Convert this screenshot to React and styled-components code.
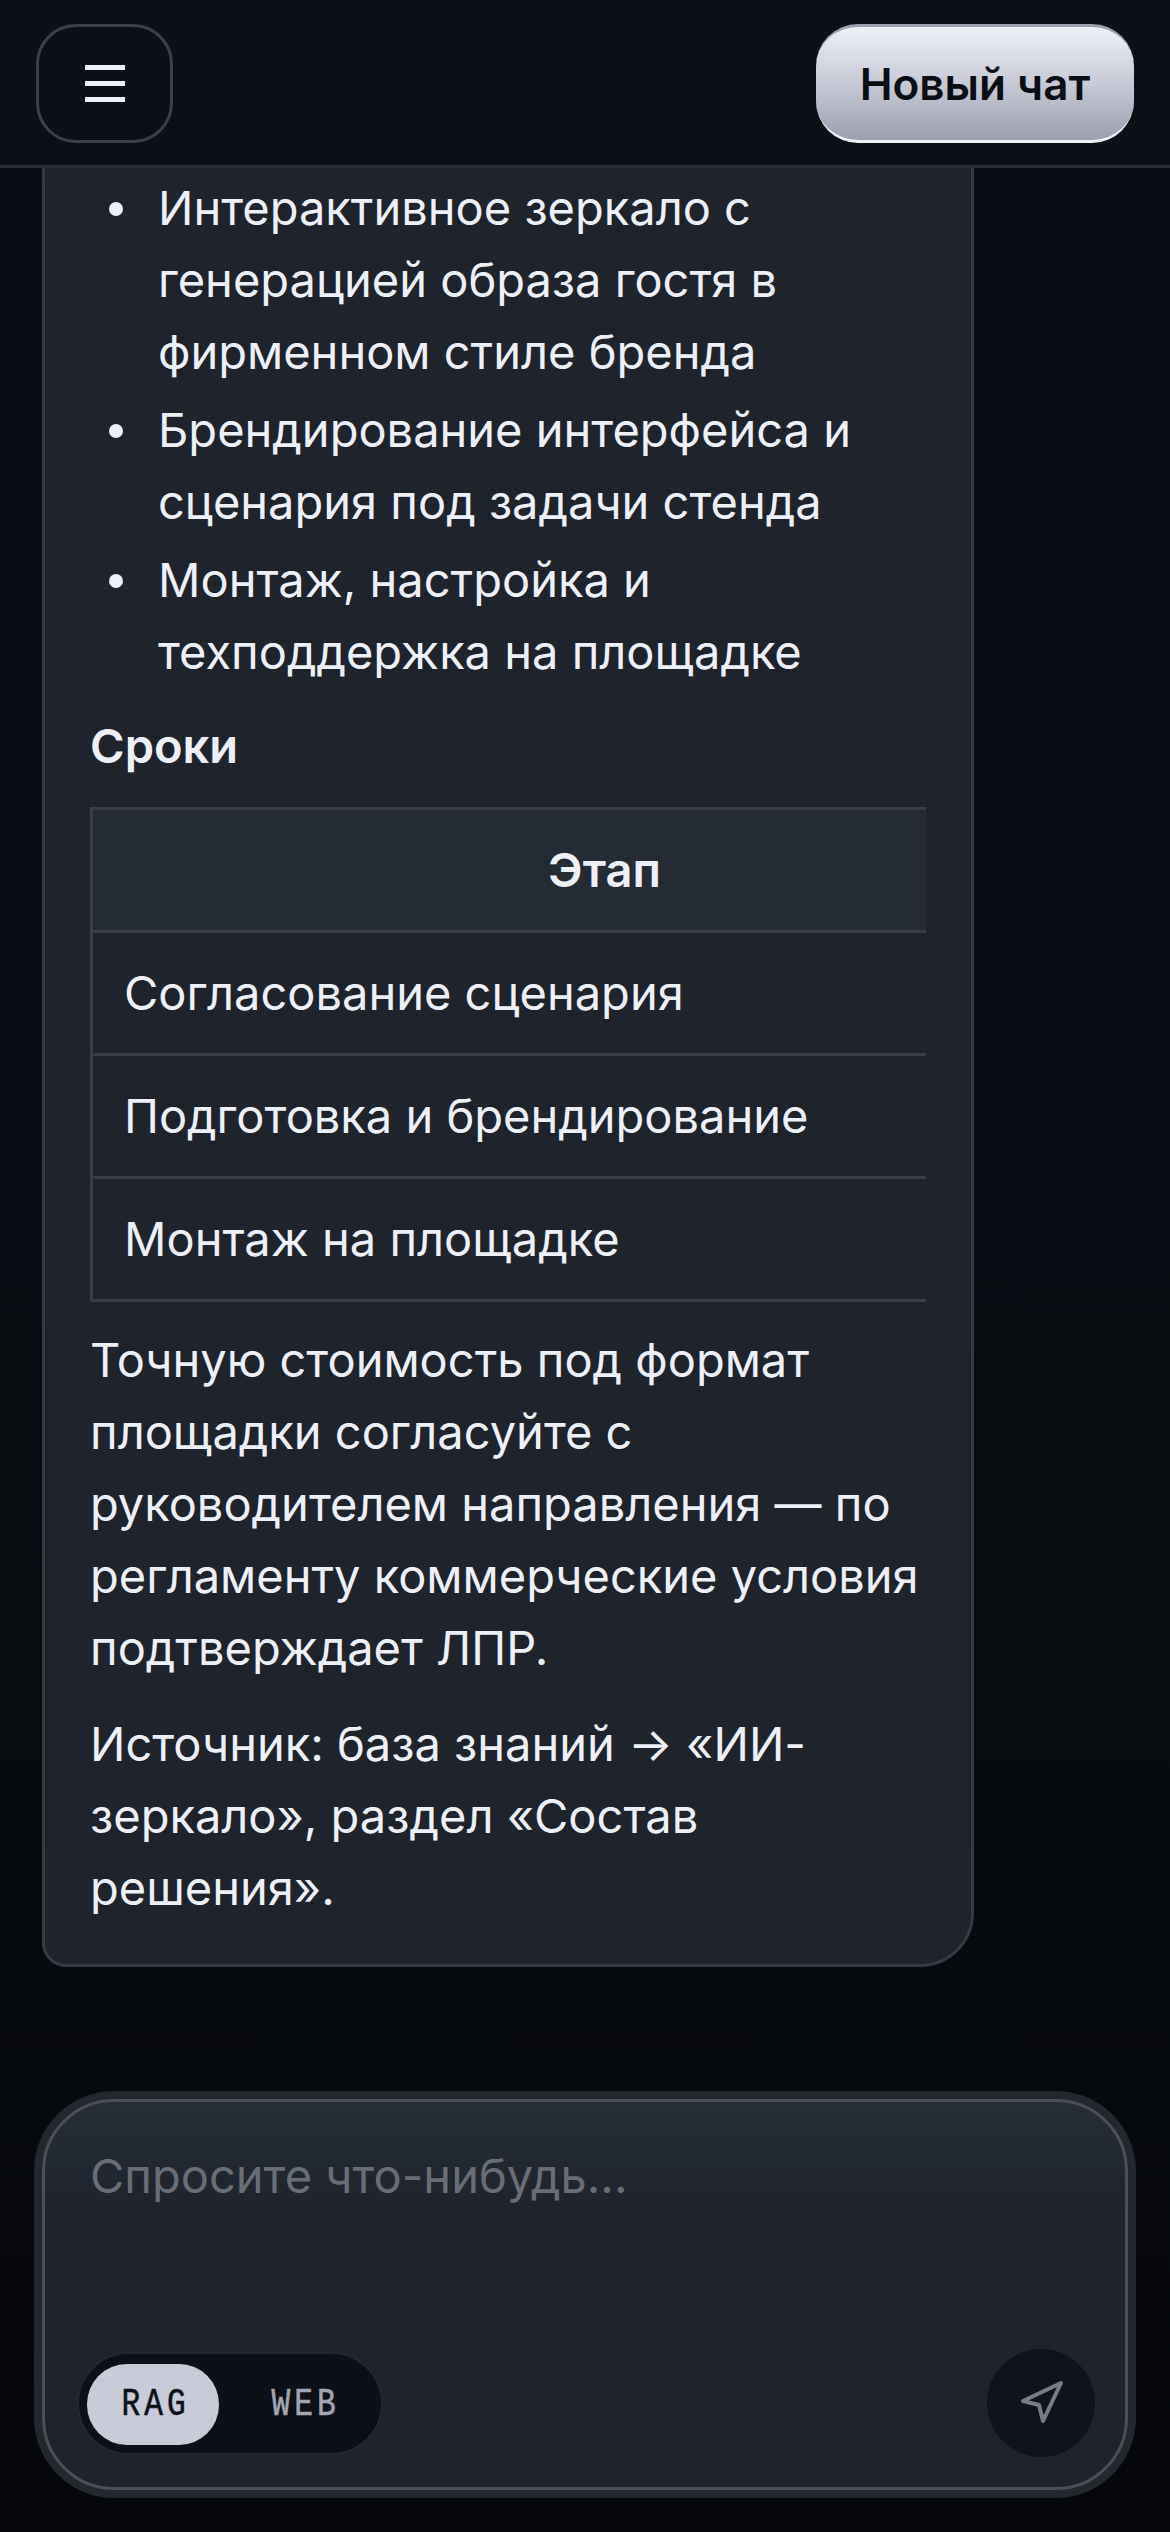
import React from "react";
import styled, { createGlobalStyle } from "styled-components";
import { Navigation } from "lucide-react";

const Global = createGlobalStyle`
  html, body {
    margin: 0;
    padding: 0;
    background: #07090e;
  }
  * {
    box-sizing: border-box;
  }
`;

const Page = styled.div`
  width: 1170px;
  height: 2532px;
  display: flex;
  flex-direction: column;
  overflow: hidden;
  font-family: Inter, "Noto Sans", sans-serif;
  color: #eef0f8;
  background: linear-gradient(180deg, #0c1016 0%, #0a0d13 50%, #05070b 100%);
`;

const Header = styled.header`
  flex: none;
  height: 168px;
  padding: 24px 36px 0;
  display: flex;
  justify-content: space-between;
  align-items: flex-start;
  background: #0d1117;
  border-bottom: 3px solid #2a2e35;
`;

const MenuButton = styled.button`
  width: 137px;
  height: 119px;
  padding: 0;
  display: flex;
  flex-direction: column;
  align-items: center;
  justify-content: center;
  gap: 11px;
  background: transparent;
  border: 3px solid #3c4047;
  border-radius: 40px;
`;

const MenuBar = styled.span`
  width: 40px;
  height: 5px;
  background: #eef0f8;
`;

const NewChat = styled.button`
  width: 318px;
  height: 119px;
  padding: 0;
  font-family: inherit;
  font-size: 44px;
  font-weight: 600;
  color: #0a0d13;
  background: linear-gradient(180deg, #eef0f8 0%, #c7cad6 50%, #9b9fae 100%);
  border: none;
  border-top: 3px solid #9b9fae;
  border-bottom: 3px solid #eef0f8;
  border-radius: 42px;
`;

const Feed = styled.main`
  flex: 1;
  min-height: 0;
  overflow: hidden;
  padding: 0 196px 132px 42px;
  display: flex;
  flex-direction: column;
  justify-content: flex-end;
`;

const Card = styled.article`
  flex: none;
  padding: 24px 45px 40px;
  font-size: 47px;
  line-height: 72px;
  background: #1e232c;
  border: 3px solid #353a43;
  border-radius: 24px 24px 54px 24px;
`;

const List = styled.ul`
  margin: 0;
  padding: 0 0 0 68px;
  list-style: none;
`;

const Item = styled.li`
  position: relative;
  & + & {
    margin-top: 6px;
  }
  &::before {
    content: "";
    position: absolute;
    left: -49px;
    top: 30px;
    width: 14px;
    height: 14px;
    border-radius: 50%;
    background: #eef0f8;
  }
`;

const Heading = styled.h3`
  margin: 22px 0 25px;
  font-size: 47px;
  font-weight: 600;
  line-height: 72px;
`;

const TableWrap = styled.div`
  overflow: hidden;
`;

const Table = styled.table`
  width: 1026px;
  border-collapse: collapse;
  th, td {
    padding: 24px 31px;
    border: 3px solid #383d46;
    border-right: none;
  }
  th {
    font-weight: 600;
    text-align: center;
    background: #252b35;
  }
  td {
    text-align: left;
  }
`;

const Paragraph = styled.p`
  margin: 22px 0 0;
  & + & {
    margin-top: 24px;
  }
`;

const Composer = styled.section`
  flex: none;
  margin: 0 42px 42px;
  height: 391px;
  padding: 0 30px 30px 32px;
  display: flex;
  flex-direction: column;
  background: linear-gradient(180deg, #272e37 0%, #1e232c 30%, #1e232c 100%);
  border: 3px solid #4b5058;
  border-radius: 72px;
  box-shadow: 0 0 0 8px #23282e;
`;

const Placeholder = styled.div`
  flex: 1;
  padding: 38px 0 0 13px;
  font-size: 47px;
  line-height: 72px;
  color: #686d77;
`;

const ComposerBar = styled.div`
  display: flex;
  justify-content: space-between;
  align-items: center;
`;

const ModeToggle = styled.div`
  width: 306px;
  height: 103px;
  padding: 10px 8px;
  display: flex;
  gap: 18px;
  background: #0d1117;
  border: 2px solid #23282f;
  border-radius: 52px;
`;

const Mode = styled.span`
  flex: none;
  width: 132px;
  height: 81px;
  display: flex;
  align-items: center;
  justify-content: center;
  color: ${(p) => (p.$active ? "#0d1117" : "#a2a6b4")};
  background: ${(p) => (p.$active ? "#c8ccd9" : "transparent")};
  border-radius: 40px;
`;

const ModeLabel = styled.span`
  display: block;
  font-family: "Liberation Mono", monospace;
  font-size: 38px;
  letter-spacing: 5px;
  margin-right: -5px;
  transform: scaleX(0.82);
  -webkit-text-stroke: 0.6px currentColor;
`;

const SendButton = styled.button`
  width: 108px;
  height: 108px;
  padding: 0;
  display: flex;
  align-items: center;
  justify-content: center;
  color: #777c87;
  background: #0f131a;
  border: none;
  border-radius: 50%;
`;

function App() {
  return (
    <Page>
      <Global />
      <Header>
        <MenuButton>
          <MenuBar />
          <MenuBar />
          <MenuBar />
        </MenuButton>
        <NewChat>Новый чат</NewChat>
      </Header>
      <Feed>
        <Card>
          <List>
            <Item>Интерактивное зеркало с генерацией образа гостя в фирменном стиле бренда</Item>
            <Item>Брендирование интерфейса и сценария под задачи стенда</Item>
            <Item>Монтаж, настройка и техподдержка на площадке</Item>
          </List>
          <Heading>Сроки</Heading>
          <TableWrap>
            <Table>
              <thead>
                <tr><th>Этап</th></tr>
              </thead>
              <tbody>
                <tr><td>Согласование сценария</td></tr>
                <tr><td>Подготовка и брендирование</td></tr>
                <tr><td>Монтаж на площадке</td></tr>
              </tbody>
            </Table>
          </TableWrap>
          <Paragraph>
            Точную стоимость под формат площадки согласуйте с руководителем направления — по регламенту коммерческие условия подтверждает ЛПР.
          </Paragraph>
          <Paragraph>Источник: база знаний → «ИИ-зеркало», раздел «Состав решения».</Paragraph>
        </Card>
      </Feed>
      <Composer>
        <Placeholder>Спросите что-нибудь...</Placeholder>
        <ComposerBar>
          <ModeToggle>
            <Mode $active><ModeLabel>RAG</ModeLabel></Mode>
            <Mode><ModeLabel>WEB</ModeLabel></Mode>
          </ModeToggle>
          <SendButton>
            <Navigation size={48} strokeWidth={2} />
          </SendButton>
        </ComposerBar>
      </Composer>
    </Page>
  );
}

export default App;
